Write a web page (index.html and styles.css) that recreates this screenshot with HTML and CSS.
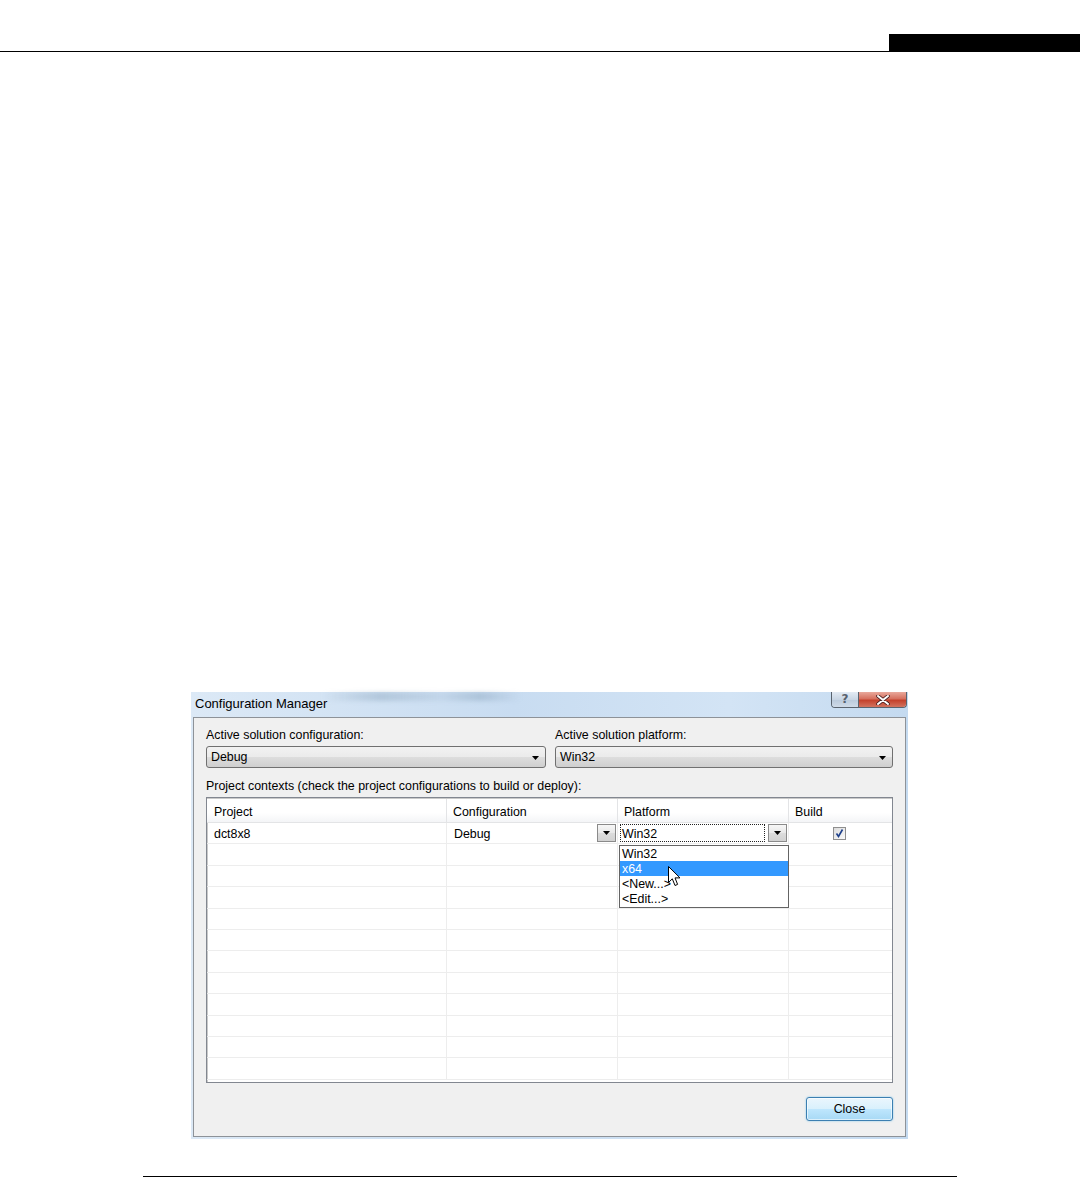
FILE: index.html
```html
<!DOCTYPE html>
<html lang="en">
<head>
    <meta charset="UTF-8">
    <meta name="viewport" content="width=device-width, initial-scale=1.0">
    <title>Configuration Manager</title>
    <link rel="stylesheet" href="styles.css">
</head>
<body>
    <div class="page-head">
        <div class="head-rule"></div>
        <div class="head-tab"></div>
    </div>

    <div class="dialog">
        <div class="titlebar">
            <span class="title">Configuration Manager</span>
            <div class="caption-btns">
                <span class="cap-help">?</span>
                <span class="cap-close">
                    <svg width="14" height="10" viewBox="0 0 14 10">
                        <path d="M2 1 L12 9 M12 1 L2 9" stroke="#4a2020" stroke-width="3.6" stroke-linecap="round"/>
                        <path d="M2 1 L12 9 M12 1 L2 9" stroke="#fff" stroke-width="2" stroke-linecap="round"/>
                    </svg>
                </span>
            </div>
        </div>

        <div class="client">
            <div class="combo-row">
                <div class="field">
                    <div class="label">Active solution configuration:</div>
                    <div class="combo">
                        <span>Debug</span>
                        <svg class="arrow" width="7" height="4" viewBox="0 0 7 4"><path d="M0 0 H7 L3.5 4 Z" fill="#000"/></svg>
                    </div>
                </div>
                <div class="field">
                    <div class="label">Active solution platform:</div>
                    <div class="combo">
                        <span>Win32</span>
                        <svg class="arrow" width="7" height="4" viewBox="0 0 7 4"><path d="M0 0 H7 L3.5 4 Z" fill="#000"/></svg>
                    </div>
                </div>
            </div>

            <div class="label ctx-label">Project contexts (check the project configurations to build or deploy):</div>

            <div class="grid">
                <div class="row head">
                    <div class="cell">Project</div>
                    <div class="cell">Configuration</div>
                    <div class="cell">Platform</div>
                    <div class="cell">Build</div>
                </div>
                <div class="row">
                    <div class="cell">dct8x8</div>
                    <div class="cell edit">
                        <span class="val">Debug</span>
                        <span class="dropbtn"><svg width="7" height="4" viewBox="0 0 7 4"><path d="M0 0 H7 L3.5 4 Z" fill="#000"/></svg></span>
                    </div>
                    <div class="cell edit">
                        <span class="val focus">Win32</span>
                        <span class="dropbtn"><svg width="7" height="4" viewBox="0 0 7 4"><path d="M0 0 H7 L3.5 4 Z" fill="#000"/></svg></span>
                    </div>
                    <div class="cell check-cell">
                        <span class="check">
                            <svg width="11" height="11" viewBox="0 0 11 11"><path d="M2.5 5.5 L4.5 8.5 L8.5 1.5" fill="none" stroke="#1d3f8a" stroke-width="1.6"/></svg>
                        </span>
                    </div>
                </div>
                <div class="row"><div class="cell"></div><div class="cell"></div><div class="cell"></div><div class="cell"></div></div>
                <div class="row"><div class="cell"></div><div class="cell"></div><div class="cell"></div><div class="cell"></div></div>
                <div class="row"><div class="cell"></div><div class="cell"></div><div class="cell"></div><div class="cell"></div></div>
                <div class="row"><div class="cell"></div><div class="cell"></div><div class="cell"></div><div class="cell"></div></div>
                <div class="row"><div class="cell"></div><div class="cell"></div><div class="cell"></div><div class="cell"></div></div>
                <div class="row"><div class="cell"></div><div class="cell"></div><div class="cell"></div><div class="cell"></div></div>
                <div class="row"><div class="cell"></div><div class="cell"></div><div class="cell"></div><div class="cell"></div></div>
                <div class="row"><div class="cell"></div><div class="cell"></div><div class="cell"></div><div class="cell"></div></div>
                <div class="row"><div class="cell"></div><div class="cell"></div><div class="cell"></div><div class="cell"></div></div>
                <div class="row"><div class="cell"></div><div class="cell"></div><div class="cell"></div><div class="cell"></div></div>
                <div class="row"><div class="cell"></div><div class="cell"></div><div class="cell"></div><div class="cell"></div></div>

                <div class="droplist">
                    <div class="item">Win32</div>
                    <div class="item selected">x64</div>
                    <div class="item">&lt;New...&gt;</div>
                    <div class="item">&lt;Edit...&gt;</div>
                </div>

                <svg class="cursor" width="13" height="21" viewBox="0 0 13 21">
                    <path d="M0.5 0.5 L0.5 16.5 L4.3 12.8 L7 19.5 L9.6 18.4 L7 11.9 L12 11.9 Z" fill="#fff" stroke="#000" stroke-width="1" stroke-linejoin="round"/>
                </svg>
            </div>

            <div class="actions">
                <button class="btn-close">Close</button>
            </div>
        </div>
    </div>

    <div class="page-foot"></div>
</body>
</html>
```

FILE: styles.css
```css
*{
    margin: 0;
    padding: 0;
    box-sizing: border-box;
}
body{
    background-color: #fff;
    font: 12.4px/15px "Segoe UI", "Liberation Sans", Arial, sans-serif;
    color: #000;
}

/* page header rule with the black tab on the right */
.page-head{
    display: flex;
    align-items: flex-end;
    height: 52px;
}
.head-rule{
    flex: 1;
    border-bottom: 1.5px solid #000;
}
.head-tab{
    width: 191px;
    height: 18px;
    background-color: #000;
}

/* the window */
.dialog{
    width: 717px;
    margin: 640px 0 0 191px;
    background: linear-gradient(to right, #dce9f6, #c8dcf1 45%, #d3e4f5 75%, #c4daf0);
    padding: 0 2px 2px 2px;
}
.titlebar{
    position: relative;
    display: flex;
    justify-content: space-between;
    align-items: flex-start;
    height: 25px;
    margin: 0 -2px;
}
.titlebar::before{
    content: "";
    position: absolute;
    left: 130px;
    top: 0;
    width: 200px;
    height: 9px;
    background: linear-gradient(to right, rgba(120,150,175,0), rgba(110,140,165,0.3) 30%, rgba(140,165,190,0.15) 60%, rgba(110,140,165,0.3) 80%, rgba(120,150,175,0));
    filter: blur(2px);
}
.title{
    position: relative;
    margin: 4px 0 0 4px;
    font-size: 13px;
    line-height: 16px;
}
.caption-btns{
    display: flex;
    margin-right: 1px;
    border: 1px solid #59636e;
    border-top: 0;
    border-radius: 0 0 4px 4px;
    overflow: hidden;
    height: 16px;
}
.cap-help{
    width: 27px;
    text-align: center;
    font: bold 12px/14px "DejaVu Sans", sans-serif;
    color: #58626e;
    background: linear-gradient(#e3ebf4, #c9d6e4 50%, #b9c9db 51%, #cfdbe8);
    border-right: 1px solid #59636e;
}
.cap-close{
    display: flex;
    align-items: center;
    justify-content: center;
    width: 47px;
    background: linear-gradient(#e9a99c, #d6705f 45%, #c4412c 55%, #d2735f);
}

.client{
    height: 420px;
    background-color: #f0f0f0;
    border: 1px solid #8d9298;
    padding: 10px 12px 0 12px;
}

.combo-row{
    display: flex;
    gap: 9px;
}
.field{
    flex: 1;
}
.field:first-child{
    flex: 0 0 340px;
}
.label{
    height: 15px;
    white-space: nowrap;
}
.combo{
    display: flex;
    justify-content: space-between;
    align-items: center;
    height: 22px;
    margin-top: 3px;
    padding: 1px 6px 0 4px;
    border: 1px solid #707070;
    border-radius: 3px;
    background: linear-gradient(#f2f2f2, #ebebeb 50%, #dddddd 51%, #cfcfcf);
}
.ctx-label{
    margin-top: 11px;
}

/* project grid */
.grid{
    position: relative;
    height: 286px;
    margin-top: 3px;
    border: 1px solid #828790;
    box-shadow: inset 1px 1px 0 #c9c9c9;
    background-color: #fff;
    overflow: hidden;
}
.row{
    display: grid;
    grid-template-columns: 240px 171px 171px 1fr;
    height: 21.4px;
    border-bottom: 1px solid #ededed;
}
.row.head{
    height: 24px;
    margin-top: 1px;
    background: linear-gradient(#ffffff, #ffffff 60%, #f4f5f7);
    border-bottom: 1px solid #e3e4e6;
}
.cell{
    display: flex;
    align-items: center;
    padding: 3px 0 0 7px;
    border-right: 1px solid #ededed;
    white-space: nowrap;
}
.row.head .cell{
    padding-left: 6px;
    border-right-color: #e3e4e6;
}
.row .cell:first-child{
    padding-left: 7px;
}
.cell:last-child{
    border-right: 0;
}
.cell.edit{
    justify-content: space-between;
    padding: 1px 1px 1px 5px;
}
.cell.edit:nth-child(3){
    padding-left: 2px;
}
.val{
    flex: 1;
    height: 18px;
    line-height: 18px;
    padding-left: 1px;
    border: 1px solid transparent;
}
.val.focus{
    border: 1px dotted #222;
    margin-right: 3px;
}
.dropbtn{
    display: flex;
    align-items: center;
    justify-content: center;
    width: 19px;
    height: 18px;
    border: 1px solid #8a8a8a;
    background: linear-gradient(#f7f7f7, #e8e8e8 50%, #dcdcdc 51%, #d2d2d2);
}
.check-cell{
    justify-content: center;
    padding: 0 2px 0 0;
}
.check{
    display: flex;
    align-items: center;
    justify-content: center;
    width: 13px;
    height: 13px;
    border: 1px solid #8f8f8f;
    background: linear-gradient(135deg, #dcdcdc, #fafafa);
}

/* open platform list */
.droplist{
    position: absolute;
    left: 412px;
    top: 47px;
    width: 170px;
    height: 63px;
    border: 1px solid #646464;
    background-color: #fff;
}
.item{
    height: 15px;
    line-height: 17px;
    padding-left: 2px;
}
.item.selected{
    background-color: #3399ff;
    color: #fff;
}
.cursor{
    position: absolute;
    left: 461px;
    top: 68px;
}

.actions{
    display: flex;
    justify-content: flex-end;
    margin-top: 14px;
}
.btn-close{
    width: 87px;
    height: 24px;
    font: 12.4px "Segoe UI", "Liberation Sans", Arial, sans-serif;
    color: #000;
    border: 1px solid #3c7fb1;
    border-radius: 3px;
    background: linear-gradient(#eaf6fd, #d9f0fc 50%, #bee6fd 51%, #a7d9f5);
    box-shadow: 0 0 2px #7cc4ec, inset 0 0 0 1px rgba(255,255,255,0.6);
}

.page-foot{
    width: 814px;
    margin: 37px 0 0 143px;
    border-top: 1.5px solid #000;
}
```
